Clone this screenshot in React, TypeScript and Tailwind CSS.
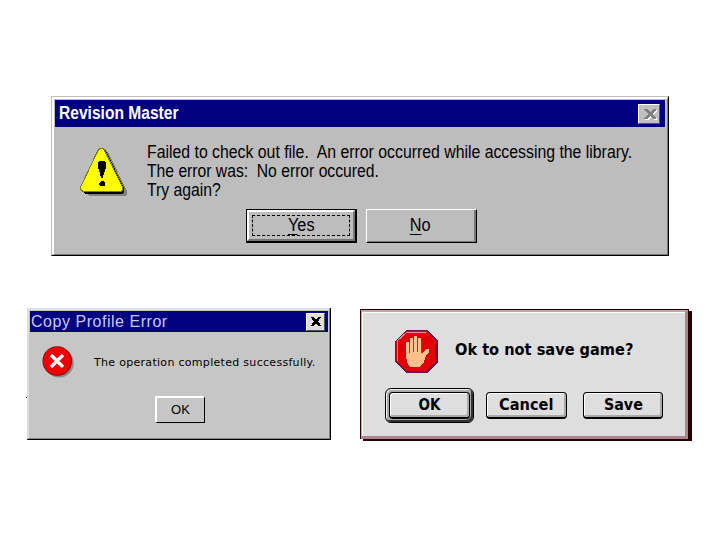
import type { ReactNode } from "react";

const arial = "font-['Liberation_Sans',Arial,sans-serif]";
const charcoal = "font-['DejaVu_Sans_Condensed','DejaVu_Sans',sans-serif] font-bold [font-stretch:condensed]";

function WarningIcon() {
  return (
    <svg width="48" height="50" viewBox="0 0 48 50" shapeRendering="crispEdges">
      <path d="M24 4H27L29 7L47 44V47L45 49H9L6 46Z" fill="#808080" />
      <path d="M20 1H24L26 4L44 41V45L42 47H5L2 44V41Z" fill="#000" />
      <path d="M19 1H23L25 3L43 40V43L41 45H3L0 43V40L17 4Z" fill="#808000" />
      <path d="M20 2H22L24 4L42 40V43L40 44H4L1 42V40L18 5Z" fill="#ff0" />
      <path d="M19 14H24L26 16V21L24 26L23 31H21L20 26L18 21V16Z" fill="#000" />
      <path d="M21 34H24L25 36V38L24 39H21L19 38V36Z" fill="#000" />
    </svg>
  );
}

function ErrorIcon() {
  return (
    <svg width="32" height="32" viewBox="0 0 32 32">
      <circle cx="17.2" cy="17" r="14.5" fill="#858585" />
      <circle cx="15.2" cy="15" r="14.7" fill="#800000" />
      <circle cx="15" cy="14.8" r="13.9" fill="#f00000" />
      <path d="M9 9L21 21M21 9L9 21" stroke="#fff" strokeWidth="3.4" />
    </svg>
  );
}

function StopIcon() {
  return (
    <svg width="44" height="44" viewBox="0 0 44 44" shapeRendering="crispEdges">
      <path d="M12 0H32L43 11V32L32 43H12L0 32V11Z" fill="#701348" />
      <path d="M12 1H31L41 11V31L31 41H12L1 31V11Z" fill="#df0008" />
      <path d="M2 31V11L12 2H31" fill="none" stroke="#f58a91" strokeWidth="1" />
      <path d="M11 12H14V21H15V8H18V20H19V6H22V20H23V8H26V23H28L31 19H34V22L31 26L29 32L25 37H15L12 32L11 25Z" fill="#ffc18b" />
      <path d="M14 12V23M18 9V22M22 8V22M26 10V23" stroke="#a33b27" fill="none" />
    </svg>
  );
}

function CloseMark({ color, className }: { color: string; className: string }) {
  return (
    <svg className={className} viewBox="0 0 12 10" preserveAspectRatio="none" shapeRendering="crispEdges">
      <path d="M0 0H3L6 3L9 0H12V1L8 5L12 9V10H9L6 7L3 10H0V9L4 5L0 1Z" fill={color} />
    </svg>
  );
}

function RevisionDialog() {
  return (
    <section className={`${arial} ml-[51px] h-[160px] w-[618px] border border-t-[#c0c0b8] border-l-[#c0c0b8] border-r-black border-b-black bg-[#bdbdbd]`}>
      <div className="h-full border-t-2 border-l-2 border-r border-b border-t-white border-l-white border-r-[#777] border-b-[#777] pt-px pl-px pr-[2px]">
        <header className="flex h-[27px] items-center justify-between bg-[#000080] pr-[5px] pl-1 text-white">
          <h1 className="origin-left scale-x-[.89] text-[17.5px] leading-[27px] font-bold whitespace-nowrap">Revision Master</h1>
          <button className="relative h-[20px] w-[22px] border border-t-white border-l-white border-r-[#555] border-b-[#555] bg-[#c0c0c0]">
            <CloseMark color="#fff" className="absolute top-[5px] left-[6px] h-[10px] w-[12px]" />
            <CloseMark color="#808080" className="absolute top-[4px] left-[5px] h-[10px] w-[12px]" />
          </button>
        </header>
        <div className="flex pt-[16px] pl-[25px]">
          <div className="mt-[4px] w-[67px] shrink-0"><WarningIcon /></div>
          <div className="h-[66px] w-[530px] shrink-0 text-[17.5px] leading-[19px] whitespace-pre text-black">
            <p className="origin-left scale-x-[.904]">Failed to check out file.  An error occurred while accessing the library.</p>
            <p className="origin-left scale-x-[.896]">The error was:  No error occured.</p>
            <p className="origin-left scale-x-[.9]">Try again?</p>
          </div>
        </div>
        <div className="flex gap-[9px] pl-[191px] text-[17.5px]">
          <button className="h-[34px] w-[111px] border border-r-2 border-b-2 border-black">
            <span className="block h-full border-2 border-t-white border-l-white border-r-[#777] border-b-[#777] p-[3px]">
              <span className="flex h-full items-center justify-center border border-dashed border-black"><span className="scale-x-[.93]"><u className="underline-offset-[3px]">Y</u>es</span></span>
            </span>
          </button>
          <button className="h-[34px] w-[111px] border border-t-white border-l-white border-r-black border-b-black">
            <span className="flex h-full items-center justify-center border-r-2 border-b border-[#777]"><span className="scale-x-[.93]"><u className="underline-offset-[3px]">N</u>o</span></span>
          </button>
        </div>
      </div>
    </section>
  );
}

function ProfileDialog() {
  return (
    <section className={`${arial} relative h-[132px] w-[304px] border-r border-b border-black bg-[#c6c6c6]`}>
      <div className="absolute top-[89px] -left-px h-px w-px bg-black" />
      <div className="h-full border-t-2 border-l-2 border-r border-b border-t-[#dedee4] border-l-[#dedede] border-r-[#888] border-b-[#888] pt-px pl-px pr-px">
        <header className="flex h-[21px] items-center justify-between bg-[#000080] pr-[3px] pl-px">
          <h2 className="text-base leading-[21px] tracking-[.53px] whitespace-nowrap text-[#c9c9ff]">Copy Profile Error</h2>
          <button className="flex h-[18px] w-[19px] items-center justify-center border border-t-white border-l-white border-r-[#555] border-b-[#555] bg-[#deded8]">
            <CloseMark color="#000" className="h-[9px] w-[10px]" />
          </button>
        </header>
        <div className="flex h-[64px] pt-[14px] pl-[12px]">
          <ErrorIcon />
          <p className="ml-[20px] pt-[8px] font-['DejaVu_Sans',sans-serif] text-[11px] leading-[18px] tracking-[.3px] whitespace-nowrap text-black">The operation completed successfully.</p>
        </div>
        <button className="ml-[125px] h-[27px] w-[50px] border border-t-2 border-l-2 border-t-white border-l-white border-r-black border-b-black text-[13px] leading-6">OK</button>
      </div>
    </section>
  );
}

function MacButton({ children, className }: { children: ReactNode; className: string }) {
  return (
    <button className={`${className} flex items-center justify-center rounded-[4px] border border-b-2 border-black bg-[#dedede] text-[15px] shadow-[inset_1px_1px_#fff,inset_-2px_-2px_#aaa]`}>
      {children}
    </button>
  );
}

function SaveDialog() {
  return (
    <section className={`${charcoal} h-[130px] w-[329px] border border-b-0 border-[#280008] bg-[#dedede] shadow-[3px_2px_#280008]`}>
      <div className="h-full border-t-2 border-l border-r-[3px] border-b-[3px] border-t-[#c5a6a9] border-l-[#c5a6a9] border-r-[#aa8589] border-b-[#aa8589]">
        <div className="h-full border-t border-l border-white">
          <div className="flex pt-[17px] pl-[32px]">
            <StopIcon />
            <p className="mt-[10px] ml-[16px] origin-left scale-x-[1.08] text-[15px] leading-[20px] whitespace-nowrap text-black">Ok to not save game?</p>
          </div>
          <div className="flex items-center pt-[14px] pl-[22px]">
            <div className="mr-[12px] h-[35px] w-[89px] rounded-[6px] border border-black bg-[#aaa] p-[3px] shadow-[inset_1px_1px_#eee,inset_-2px_-2px_#333]">
              <MacButton className="h-[27px] w-[81px]">OK</MacButton>
            </div>
            <MacButton className="mr-[16px] h-[27px] w-[81px]"><span className="scale-x-[1.08]">Cancel</span></MacButton>
            <MacButton className="h-[27px] w-[80px]"><span className="scale-x-[1.06]">Save</span></MacButton>
          </div>
        </div>
      </div>
    </section>
  );
}

export default function App() {
  return (
    <main className="h-[540px] w-[720px] overflow-hidden bg-white pt-[96px]">
      <RevisionDialog />
      <div className="mt-[52px] flex pl-[27px]">
        <ProfileDialog />
        <div className="mt-px ml-[29px]"><SaveDialog /></div>
      </div>
    </main>
  );
}
